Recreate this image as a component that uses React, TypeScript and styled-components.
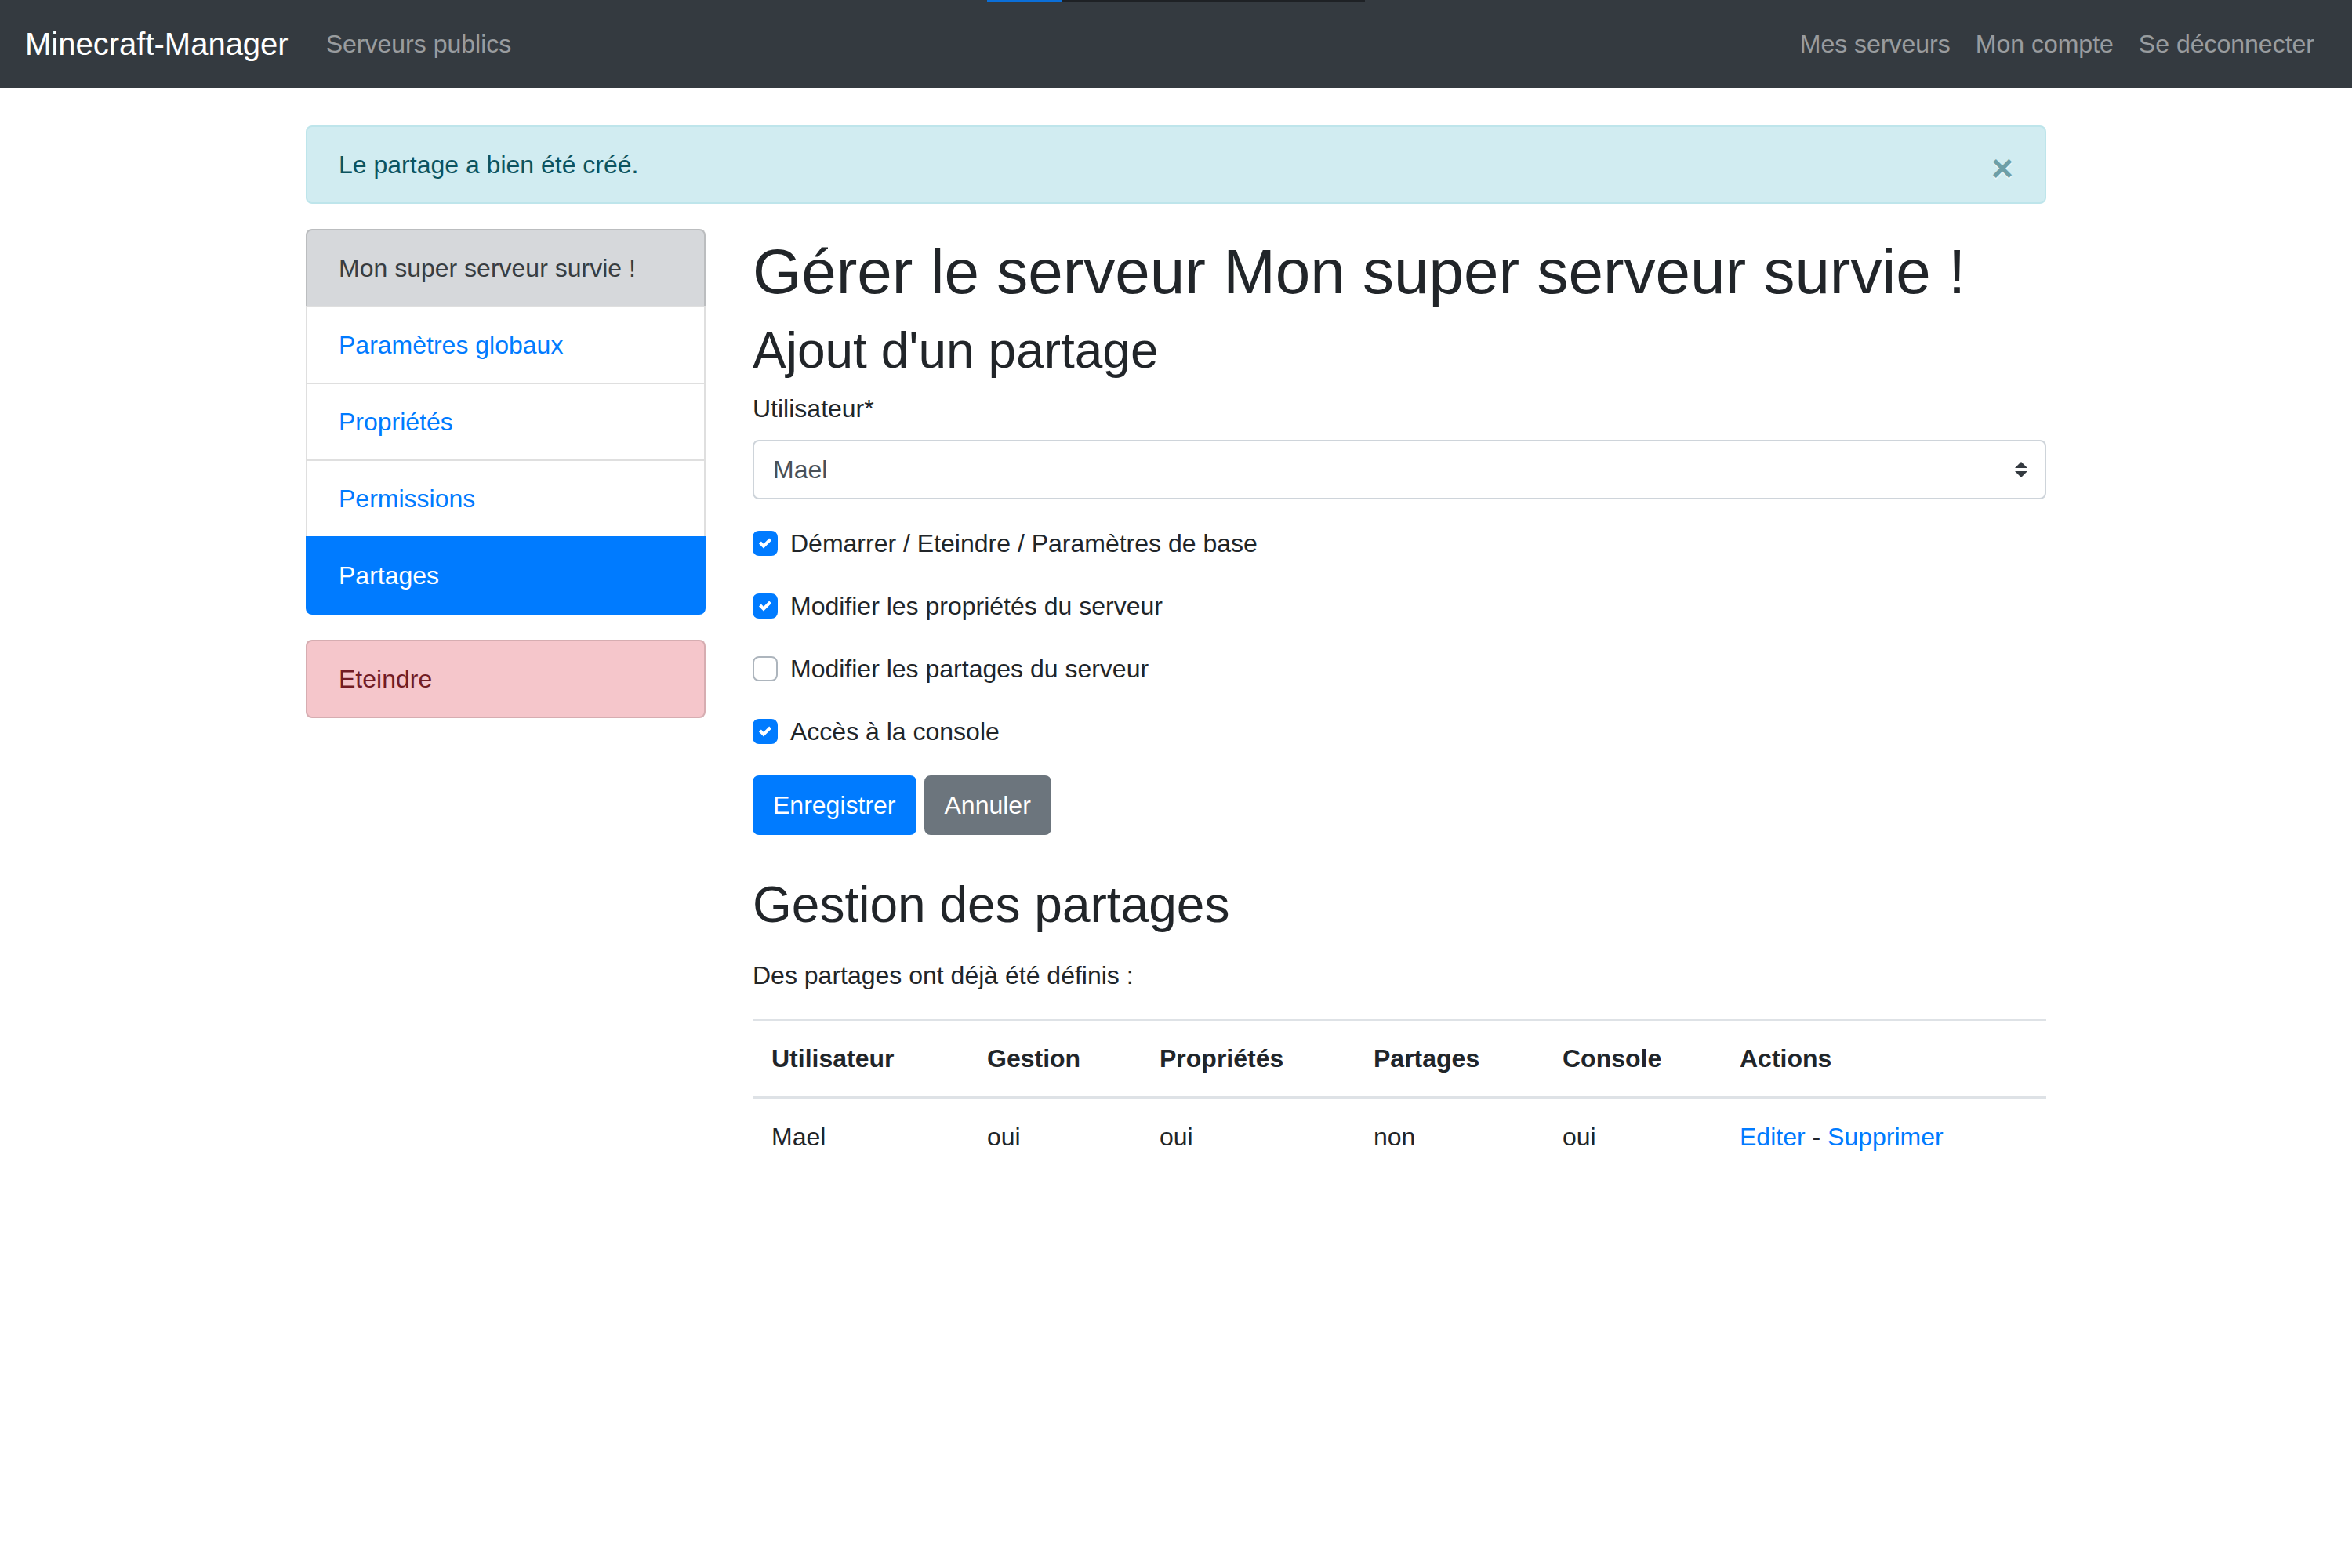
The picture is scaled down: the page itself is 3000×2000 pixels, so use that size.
import styled, { createGlobalStyle } from "styled-components";

const GlobalStyle = createGlobalStyle`
  html, body {
    margin: 0;
    padding: 0;
    background: #fff;
  }
  body {
    font-family: "Liberation Sans", Arial, sans-serif;
    font-size: 32px;
    line-height: 1.5;
    color: #212529;
  }
  * {
    box-sizing: border-box;
  }
`;

const Page = styled.div`
  position: relative;
  min-height: 2000px;
`;

// barre de chargement fine en haut de page
const LoadingBar = styled.div`
  position: absolute;
  top: 0;
  left: 1259px;
  display: flex;
  height: 2px;
  z-index: 10;
`;

const LoadingPart = styled.div<{ $w: number; $color: string }>`
  width: ${(p) => p.$w}px;
  background: ${(p) => p.$color};
`;

const Navbar = styled.nav`
  display: flex;
  align-items: center;
  justify-content: space-between;
  padding: 16px 32px;
  background: #343a40;
`;

const NavLeft = styled.div`
  display: flex;
  align-items: center;
`;

const NavRight = styled.div`
  display: flex;
  align-items: center;
`;

const Brand = styled.a`
  font-size: 40px;
  line-height: 60px;
  padding: 10px 0;
  margin-right: 32px;
  color: #fff;
  text-decoration: none;
`;

const NavLink = styled.a`
  padding: 16px;
  line-height: 48px;
  color: rgba(255, 255, 255, 0.5);
  text-decoration: none;
`;

const Container = styled.div`
  width: 2220px;
  margin: 48px auto 0;
`;

const Alert = styled.div`
  display: flex;
  align-items: center;
  justify-content: space-between;
  padding: 24px 40px;
  margin-bottom: 32px;
  border: 2px solid #bee5eb;
  border-radius: 8px;
  background: #d1ecf1;
  color: #0c5460;
`;

const CloseButton = styled.button`
  height: 48px;
  padding: 0;
  border: 0;
  background: transparent;
  font-family: "Liberation Sans", Arial, sans-serif;
  font-size: 48px;
  font-weight: 700;
  line-height: 58px;
  color: inherit;
  opacity: 0.5;
  text-shadow: 0 2px 0 #fff;
  cursor: pointer;
`;

const Row = styled.div`
  display: grid;
  grid-template-columns: 510px 1650px;
  column-gap: 60px;
  align-items: start;
`;

const Sidebar = styled.div`
  display: flex;
  flex-direction: column;
  gap: 32px;
`;

const ListGroup = styled.div`
  display: flex;
  flex-direction: column;
`;

type ItemKind = "secondary" | "link" | "active" | "danger";

const itemColors: Record<ItemKind, { bg: string; fg: string; border: string }> = {
  secondary: { bg: "#d6d8db", fg: "#383d41", border: "rgba(0, 0, 0, 0.125)" },
  link: { bg: "#fff", fg: "#007bff", border: "rgba(0, 0, 0, 0.125)" },
  active: { bg: "#007bff", fg: "#fff", border: "#007bff" },
  danger: { bg: "#f5c6cb", fg: "#721c24", border: "rgba(0, 0, 0, 0.125)" },
};

const ListItem = styled.a<{ $kind: ItemKind }>`
  position: relative;
  display: block;
  padding: 24px 40px;
  margin-bottom: -2px;
  line-height: 48px;
  border: 2px solid ${(p) => itemColors[p.$kind].border};
  background: ${(p) => itemColors[p.$kind].bg};
  color: ${(p) => itemColors[p.$kind].fg};
  text-decoration: none;
  z-index: ${(p) => (p.$kind === "active" ? 2 : 1)};

  &:first-child {
    border-top-left-radius: 8px;
    border-top-right-radius: 8px;
  }
  &:last-child {
    margin-bottom: 0;
    border-bottom-left-radius: 8px;
    border-bottom-right-radius: 8px;
  }
`;

const Main = styled.main`
  display: flex;
  flex-direction: column;
`;

const Title = styled.h1`
  margin: 0 0 9px;
  padding-top: 7px;
  font-size: 80px;
  font-weight: 500;
  line-height: 96px;
`;

const SubTitle = styled.h2<{ $spaceTop?: number; $spaceBottom?: number }>`
  margin: ${(p) => p.$spaceTop ?? 0}px 0 ${(p) => p.$spaceBottom ?? 11}px;
  padding-top: 5px;
  font-size: 64px;
  font-weight: 500;
  line-height: 76.8px;
`;

const FormGroup = styled.div`
  margin-bottom: 32px;
`;

const Label = styled.label`
  display: inline-block;
  margin-bottom: 16px;
  line-height: 48px;
`;

const SelectWrap = styled.div`
  position: relative;
`;

const Select = styled.select`
  display: block;
  width: 100%;
  height: 76px;
  padding: 12px 72px 12px 24px;
  border: 2px solid #ced4da;
  border-radius: 8px;
  background: #fff;
  font-family: "Liberation Sans", Arial, sans-serif;
  font-size: 32px;
  line-height: 48px;
  color: #495057;
  appearance: none;
  -webkit-appearance: none;
  outline: none;
`;

const SelectArrow = styled.svg`
  position: absolute;
  right: 24px;
  top: 50%;
  width: 16px;
  height: 20px;
  transform: translateY(-50%);
  pointer-events: none;
`;

const CheckRow = styled.label`
  display: flex;
  align-items: flex-start;
  gap: 16px;
  min-height: 48px;
  margin-bottom: 32px;
  line-height: 48px;
`;

const CheckBox = styled.span<{ $checked: boolean }>`
  display: flex;
  align-items: center;
  justify-content: center;
  flex: none;
  width: 32px;
  height: 32px;
  margin-top: 8px;
  border-radius: 8px;
  border: 2px solid ${(p) => (p.$checked ? "#007bff" : "#adb5bd")};
  background: ${(p) => (p.$checked ? "#007bff" : "#fff")};
`;

const ButtonRow = styled.div`
  display: flex;
  gap: 10px;
`;

const Button = styled.button<{ $variant: "primary" | "secondary" }>`
  padding: 12px 24px;
  border: 2px solid ${(p) => (p.$variant === "primary" ? "#007bff" : "#6c757d")};
  border-radius: 8px;
  background: ${(p) => (p.$variant === "primary" ? "#007bff" : "#6c757d")};
  color: #fff;
  font-family: "Liberation Sans", Arial, sans-serif;
  font-size: 32px;
  line-height: 48px;
  cursor: pointer;
`;

const Text = styled.p`
  margin: 0 0 32px;
`;

const Table = styled.table`
  width: 100%;
  border-collapse: collapse;
  table-layout: fixed;
`;

const Th = styled.th<{ $w?: number }>`
  width: ${(p) => (p.$w ? `${p.$w}px` : "auto")};
  padding: 24px;
  text-align: left;
  vertical-align: bottom;
  font-weight: 700;
  line-height: 48px;
  border-top: 2px solid #dee2e6;
  border-bottom: 4px solid #dee2e6;
`;

const Td = styled.td`
  padding: 24px;
  line-height: 48px;
  vertical-align: top;
  border-top: 2px solid #dee2e6;
`;

const Link = styled.a`
  color: #007bff;
  text-decoration: none;
`;

function Check({ checked, label }: { checked: boolean; label: string }) {
  return (
    <CheckRow>
      <CheckBox $checked={checked}>
        {checked && (
          <svg width="16" height="16" viewBox="0 0 8 8">
            <path fill="#fff" d="M6.564.75l-3.59 3.612-1.538-1.55L0 4.26l2.974 2.99L8 2.193z" />
          </svg>
        )}
      </CheckBox>
      <span>{label}</span>
    </CheckRow>
  );
}

const shares = [
  { user: "Mael", gestion: "oui", props: "oui", partages: "non", console: "oui" },
];

export default function App() {
  return (
    <Page>
      <GlobalStyle />
      <LoadingBar>
        <LoadingPart $w={96} $color="#0b6fd9" />
        <LoadingPart $w={386} $color="#1e2125" />
      </LoadingBar>

      <Navbar>
        <NavLeft>
          <Brand href="#">Minecraft-Manager</Brand>
          <NavLink href="#">Serveurs publics</NavLink>
        </NavLeft>
        <NavRight>
          <NavLink href="#">Mes serveurs</NavLink>
          <NavLink href="#">Mon compte</NavLink>
          <NavLink href="#">Se déconnecter</NavLink>
        </NavRight>
      </Navbar>

      <Container>
        <Alert>
          <span>Le partage a bien été créé.</span>
          <CloseButton aria-label="Fermer">×</CloseButton>
        </Alert>

        <Row>
          <Sidebar>
            <ListGroup>
              <ListItem $kind="secondary">Mon super serveur survie !</ListItem>
              <ListItem $kind="link" href="#">Paramètres globaux</ListItem>
              <ListItem $kind="link" href="#">Propriétés</ListItem>
              <ListItem $kind="link" href="#">Permissions</ListItem>
              <ListItem $kind="active" href="#">Partages</ListItem>
            </ListGroup>
            <ListGroup>
              <ListItem $kind="danger" href="#">Eteindre</ListItem>
            </ListGroup>
          </Sidebar>

          <Main>
            <Title>Gérer le serveur Mon super serveur survie !</Title>
            <SubTitle>Ajout d'un partage</SubTitle>

            <FormGroup>
              <Label htmlFor="user">Utilisateur*</Label>
              <SelectWrap>
                <Select id="user" defaultValue="mael">
                  <option value="mael">Mael</option>
                </Select>
                <SelectArrow viewBox="0 0 4 5">
                  <path fill="#343a40" d="M2 0L0 2h4zm0 5L0 3h4z" />
                </SelectArrow>
              </SelectWrap>
            </FormGroup>

            <Check checked label="Démarrer / Eteindre / Paramètres de base" />
            <Check checked label="Modifier les propriétés du serveur" />
            <Check checked={false} label="Modifier les partages du serveur" />
            <Check checked label="Accès à la console" />

            <ButtonRow>
              <Button $variant="primary">Enregistrer</Button>
              <Button $variant="secondary">Annuler</Button>
            </ButtonRow>

            <SubTitle $spaceTop={46} $spaceBottom={27}>Gestion des partages</SubTitle>
            <Text>Des partages ont déjà été définis :</Text>

            <Table>
              <thead>
                <tr>
                  <Th $w={275}>Utilisateur</Th>
                  <Th $w={220}>Gestion</Th>
                  <Th $w={273}>Propriétés</Th>
                  <Th $w={241}>Partages</Th>
                  <Th $w={226}>Console</Th>
                  <Th>Actions</Th>
                </tr>
              </thead>
              <tbody>
                {shares.map((s) => (
                  <tr key={s.user}>
                    <Td>{s.user}</Td>
                    <Td>{s.gestion}</Td>
                    <Td>{s.props}</Td>
                    <Td>{s.partages}</Td>
                    <Td>{s.console}</Td>
                    <Td>
                      <Link href="#">Editer</Link> - <Link href="#">Supprimer</Link>
                    </Td>
                  </tr>
                ))}
              </tbody>
            </Table>
          </Main>
        </Row>
      </Container>
    </Page>
  );
}
